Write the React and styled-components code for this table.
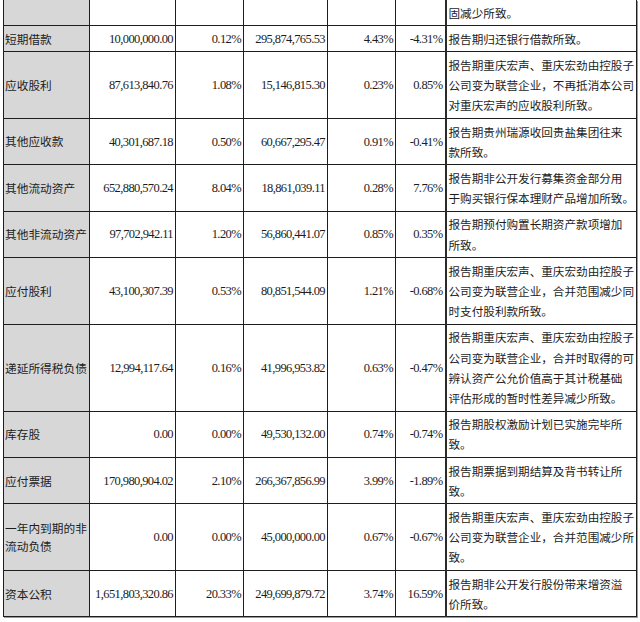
import React from 'react';
import styled, { createGlobalStyle } from 'styled-components';

const GlobalStyle = createGlobalStyle`
  body {
    margin: 0;
    background: #ffffff;
  }
`;

const Page = styled.div`
  width: 640px;
  height: 622px;
  overflow: hidden;
  padding-left: 3px;
  box-sizing: border-box;
`;

const Table = styled.table`
  border-collapse: collapse;
  table-layout: fixed;
  width: 633px;
  box-shadow: 1px 1px 0 #9a9a9a;
`;

const Cell = styled.td`
  border: 1px solid #1e1e1e;
  border-top: ${p => (p.$first ? 'none' : '1px solid #1e1e1e')};
  padding: 2.5px 1px;
  line-height: 20.2px;
  vertical-align: middle;
  color: #1c1c1c;
`;

const NameCell = styled(Cell)`
  background: #d7d7d7;
  font-family: "Noto Sans CJK SC", sans-serif;
  font-size: 11.7px;
  line-height: 18.5px;
  text-align: left;
  padding-left: 1px;
`;

const NumCell = styled(Cell)`
  font-family: "Liberation Serif", serif;
  font-size: 12.5px;
  letter-spacing: -0.6px;
  text-align: right;
  padding-right: 2px;
  white-space: nowrap;
`;

const DescCell = styled(Cell)`
  border-left: 2px solid #2a2a2a;
  font-family: "Noto Sans CJK SC", sans-serif;
  font-size: 11.6px;
  text-align: left;
  padding-left: 2px;
`;

const Line = styled.div`
  white-space: nowrap;
`;

const rows = [
  { name: '', vals: ['', '', '', '', ''], desc: ['固减少所致。'], first: true },
  { name: '短期借款', vals: ['10,000,000.00', '0.12%', '295,874,765.53', '4.43%', '-4.31%'], desc: ['报告期归还银行借款所致。'] },
  { name: '应收股利', vals: ['87,613,840.76', '1.08%', '15,146,815.30', '0.23%', '0.85%'], desc: ['报告期重庆宏声、重庆宏劲由控股子', '公司变为联营企业，不再抵消本公司', '对重庆宏声的应收股利所致。'] },
  { name: '其他应收款', vals: ['40,301,687.18', '0.50%', '60,667,295.47', '0.91%', '-0.41%'], desc: ['报告期贵州瑞源收回贵盐集团往来', '款所致。'] },
  { name: '其他流动资产', vals: ['652,880,570.24', '8.04%', '18,861,039.11', '0.28%', '7.76%'], desc: ['报告期非公开发行募集资金部分用', '于购买银行保本理财产品增加所致。'] },
  { name: '其他非流动资产', vals: ['97,702,942.11', '1.20%', '56,860,441.07', '0.85%', '0.35%'], desc: ['报告期预付购置长期资产款项增加', '所致。'] },
  { name: '应付股利', vals: ['43,100,307.39', '0.53%', '80,851,544.09', '1.21%', '-0.68%'], desc: ['报告期重庆宏声、重庆宏劲由控股子', '公司变为联营企业，合并范围减少同', '时支付股利款所致。'] },
  { name: '递延所得税负债', vals: ['12,994,117.64', '0.16%', '41,996,953.82', '0.63%', '-0.47%'], desc: ['报告期重庆宏声、重庆宏劲由控股子', '公司变为联营企业，合并时取得的可', '辨认资产公允价值高于其计税基础', '评估形成的暂时性差异减少所致。'] },
  { name: '库存股', vals: ['0.00', '0.00%', '49,530,132.00', '0.74%', '-0.74%'], desc: ['报告期股权激励计划已实施完毕所', '致。'] },
  { name: '应付票据', vals: ['170,980,904.02', '2.10%', '266,367,856.99', '3.99%', '-1.89%'], desc: ['报告期票据到期结算及背书转让所', '致。'] },
  { name: '一年内到期的非流动负债', vals: ['0.00', '0.00%', '45,000,000.00', '0.67%', '-0.67%'], desc: ['报告期重庆宏声、重庆宏劲由控股子', '公司变为联营企业，合并范围减少所', '致。'] },
  { name: '资本公积', vals: ['1,651,803,320.86', '20.33%', '249,699,879.72', '3.74%', '16.59%'], desc: ['报告期非公开发行股份带来增资溢', '价所致。'] },
];

const widths = [86, 86, 68, 84, 68, 50, 191];

const App = () => {
  return <Page>
    <GlobalStyle />
    <Table>
      <colgroup>
        {widths.map((w, i) => <col key={i} style={{ width: w }} />)}
      </colgroup>
      <tbody>
        {rows.map((r, i) => (
          <tr key={i}>
            <NameCell $first={r.first}>{r.name}</NameCell>
            {r.vals.map((v, j) => <NumCell key={j} $first={r.first}>{v}</NumCell>)}
            <DescCell $first={r.first}>
              {r.desc.map((l, k) => <Line key={k}>{l}</Line>)}
            </DescCell>
          </tr>
        ))}
      </tbody>
    </Table>
  </Page>
}

export default App;
